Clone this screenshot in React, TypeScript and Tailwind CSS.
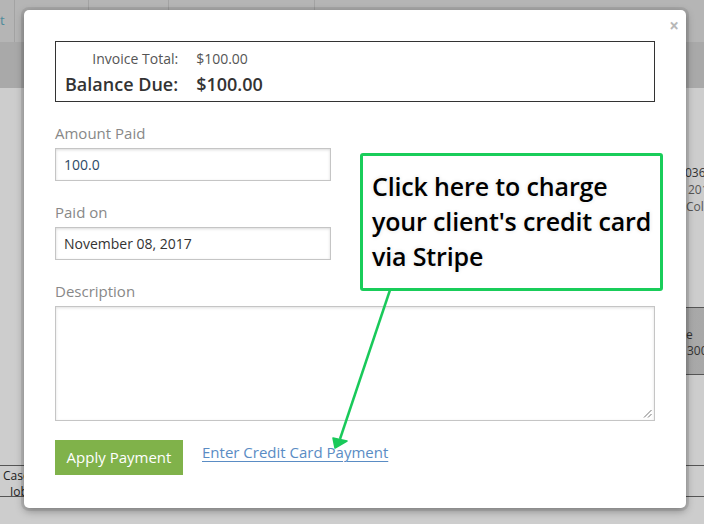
import React from 'react';

const font = { fontFamily: '"Open Sans", "Noto Sans", sans-serif' };

function BackgroundPage() {
  return (
    <div className="flex h-full flex-col bg-[#cdcdcd]">
      {/* tab bar */}
      <div className="flex h-[42px] bg-[#b5b5b5]">
        <div className="flex w-[15px] items-center border-r border-[#a3a3a3] text-[13px] text-[#4e8a9a]">t</div>
        <div className="w-[74px] border-r border-[#a3a3a3]" />
        <div className="w-[80px] border-r border-[#a3a3a3]" />
        <div className="w-[146px] border-r border-[#a3a3a3]" />
        <div className="flex-1" />
      </div>
      <div className="h-[46px] bg-[#a9a9a9]" />
      <div className="flex flex-1 flex-col">
        <div className="flex h-[219px] justify-end">
          <div className="w-[18px] overflow-hidden whitespace-nowrap pt-[76px] text-[12px] leading-[17px] text-[#333]">
            <div className="-ml-px">036</div>
            <div className="ml-[2px] text-[#555]">201</div>
            <div className="text-[12px] text-[#555]">Colli</div>
          </div>
        </div>
        <div className="flex h-[68px]">
          <div className="w-[400px]" />
          <div className="flex flex-1 justify-end border-y border-[#555] bg-gradient-to-r from-[#c8c8c8] via-[#b0b0b0] to-[#a8a8a8]">
            <div className="w-[18px] overflow-hidden whitespace-nowrap pt-[19px] text-[12px] leading-[16px] text-[#333]">
              <div>e</div>
              <div className="ml-[1px]">300</div>
            </div>
          </div>
        </div>
        <div className="h-[90px]" />
        <div className="flex h-[32px] border-y border-[#555]">
          <div className="w-[24px] overflow-hidden whitespace-nowrap pt-[2px] text-[12px] leading-[16px] text-[#222]">
            <div className="pl-[3px]">Case</div>
            <div className="pl-[10px]">Job</div>
          </div>
        </div>
        <div className="flex-1" />
      </div>
    </div>
  );
}

function Callout() {
  return (
    <div className="absolute left-[336px] top-[143px] h-[138px] w-[303px] rounded-[3px] border-[3px] border-[#19cd5a] bg-white pl-[9px] pt-[13px]">
      <p className="text-[25px] font-semibold leading-[35px] tracking-[-0.15px] text-black [text-shadow:0_0_3px_#fff,0_0_4px_#ddd]">
        Click here to charge
        <br />
        your client's credit card
        <br />
        via Stripe
      </p>
    </div>
  );
}

function Arrow() {
  return (
    <svg className="pointer-events-none absolute left-0 top-0" width="662" height="498" viewBox="0 0 662 498">
      <line x1="366" y1="280" x2="316" y2="429" stroke="#19c95a" strokeWidth="2.5" />
      <polygon points="311,438 309,428 323,431" fill="#19c95a" stroke="#19c95a" strokeWidth="1.5" strokeLinejoin="round" />
    </svg>
  );
}

export default function App() {
  return (
    <div className="relative h-[524px] w-[704px] overflow-hidden" style={font}>
      <BackgroundPage />

      <div className="absolute left-[24px] top-[10px] h-[498px] w-[662px] rounded-[5px] bg-white px-[31px] pt-[31px] shadow-[0_0_0_3px_rgba(0,0,0,0.08),0_3px_9px_rgba(0,0,0,0.35)]">
        <button className="absolute right-[7px] top-[7px] text-[17px] font-bold leading-none text-[#b8b8b8]">×</button>

        <div className="grid h-[61px] grid-cols-[auto_1fr] content-center items-center gap-x-[18px] gap-y-[3px] border border-[#333] pl-[9px] pt-[1px]">
          <span className="whitespace-nowrap text-right text-[14px] leading-[20px] text-[#555]">Invoice Total:</span>
          <span className="text-[14px] leading-[20px] text-[#555]">$100.00</span>
          <span className="whitespace-nowrap text-right text-[18px] font-semibold leading-[24px] text-[#333]">Balance Due:</span>
          <span className="text-[18px] font-semibold leading-[24px] text-[#333]">$100.00</span>
        </div>

        <label className="mt-[21px] mb-[5px] block text-[15px] leading-[20px] text-[#888]">Amount Paid</label>
        <div className="flex h-[33px] w-[276px] items-center border border-[#c5c5c5] px-[8px] text-[14px] text-[#2d4a66] shadow-[inset_0_1px_3px_rgba(0,0,0,0.15)]">
          100.0
        </div>

        <label className="mt-[21px] mb-[5px] block text-[15px] leading-[20px] text-[#888]">Paid on</label>
        <div className="flex h-[33px] w-[276px] items-center border border-[#c5c5c5] px-[8px] text-[14px] text-[#333] shadow-[inset_0_1px_3px_rgba(0,0,0,0.15)]">
          November 08, 2017
        </div>

        <label className="mt-[21px] mb-[5px] block text-[15px] leading-[20px] text-[#888]">Description</label>
        <div className="relative h-[115px] w-full border border-[#c5c5c5] shadow-[inset_0_1px_3px_rgba(0,0,0,0.12)]">
          <svg className="absolute bottom-[2px] right-[2px]" width="9" height="9" viewBox="0 0 9 9">
            <line x1="1" y1="8.5" x2="8.5" y2="1" stroke="#777" strokeWidth="1" />
            <line x1="5" y1="8.5" x2="8.5" y2="5" stroke="#777" strokeWidth="1" />
          </svg>
        </div>

        <div className="mt-[19px] flex items-start">
          <button className="h-[35px] w-[128px] bg-[#80b24a] text-[15px] text-white">Apply Payment</button>
          <a className="ml-[19px] mt-[2px] text-[15px] leading-[20px] text-[#5a8cc4] underline underline-offset-[3px]">
            Enter Credit Card Payment
          </a>
        </div>

        <Callout />
        <Arrow />
      </div>
    </div>
  );
}
